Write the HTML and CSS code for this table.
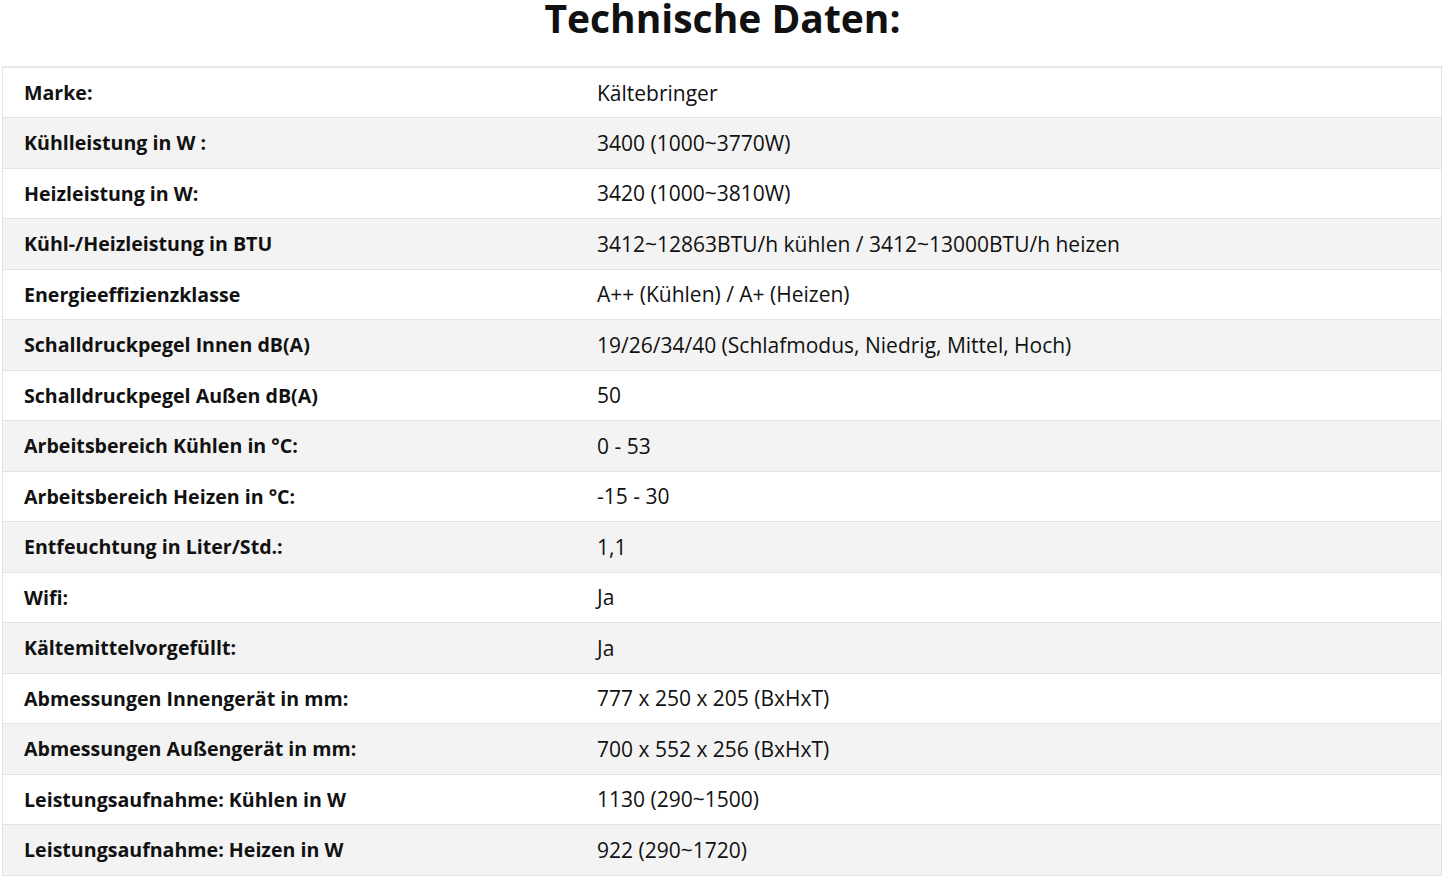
FILE: index.html
```html
<!DOCTYPE html>
<html lang="de">
<head>
<meta charset="utf-8">
<title>Technische Daten</title>
<link rel="stylesheet" href="styles.css">
</head>
<body>
<h1 class="title">Technische Daten:</h1>
<table class="specs">
<tbody>
<tr><td>Marke:</td><td>Kältebringer</td></tr>
<tr><td>Kühlleistung in W :</td><td>3400 (1000~3770W)</td></tr>
<tr><td>Heizleistung in W:</td><td>3420 (1000~3810W)</td></tr>
<tr><td>Kühl-/Heizleistung in BTU</td><td>3412~12863BTU/h kühlen / 3412~13000BTU/h heizen</td></tr>
<tr><td>Energieeffizienzklasse</td><td>A++ (Kühlen) / A+ (Heizen)</td></tr>
<tr><td>Schalldruckpegel Innen dB(A)</td><td>19/26/34/40 (Schlafmodus, Niedrig, Mittel, Hoch)</td></tr>
<tr><td>Schalldruckpegel Außen dB(A)</td><td>50</td></tr>
<tr><td>Arbeitsbereich Kühlen in °C:</td><td>0 - 53</td></tr>
<tr><td>Arbeitsbereich Heizen in °C:</td><td>-15 - 30</td></tr>
<tr><td>Entfeuchtung in Liter/Std.:</td><td>1,1</td></tr>
<tr><td>Wifi:</td><td>Ja</td></tr>
<tr><td>Kältemittelvorgefüllt:</td><td>Ja</td></tr>
<tr><td>Abmessungen Innengerät in mm:</td><td>777 x 250 x 205 (BxHxT)</td></tr>
<tr><td>Abmessungen Außengerät in mm:</td><td>700 x 552 x 256 (BxHxT)</td></tr>
<tr><td>Leistungsaufnahme: Kühlen in W</td><td>1130 (290~1500)</td></tr>
<tr><td>Leistungsaufnahme: Heizen in W</td><td>922 (290~1720)</td></tr>
</tbody>
</table>
</body>
</html>
```
FILE: styles.css
```css
html, body {
  margin: 0;
  padding: 0;
  background: #ffffff;
}
body {
  font-family: "Open Sans", "Noto Sans", sans-serif;
  color: #111111;
  overflow: hidden;
}
.title {
  margin: 0;
  height: 66px;
  font-size: 39px;
  font-weight: 700;
  line-height: 36px;
  text-align: center;
}
.specs {
  margin-left: 2px;
  width: 1440px;
  border-collapse: collapse;
  border: 1px solid #e3e3e3;
  border-top: 2px solid #e6e6e6;
  font-size: 21px;
}
.specs tr {
  height: 50.5px;
}
.specs tr:nth-child(even) {
  background: #f3f3f3;
}
.specs td {
  padding: 0 0 0 21px;
  border-bottom: 1px solid #e3e3e3;
  vertical-align: middle;
  white-space: nowrap;
}
.specs td:first-child {
  width: 552px;
  font-weight: 700;
  font-size: 19.6px;
}
```
